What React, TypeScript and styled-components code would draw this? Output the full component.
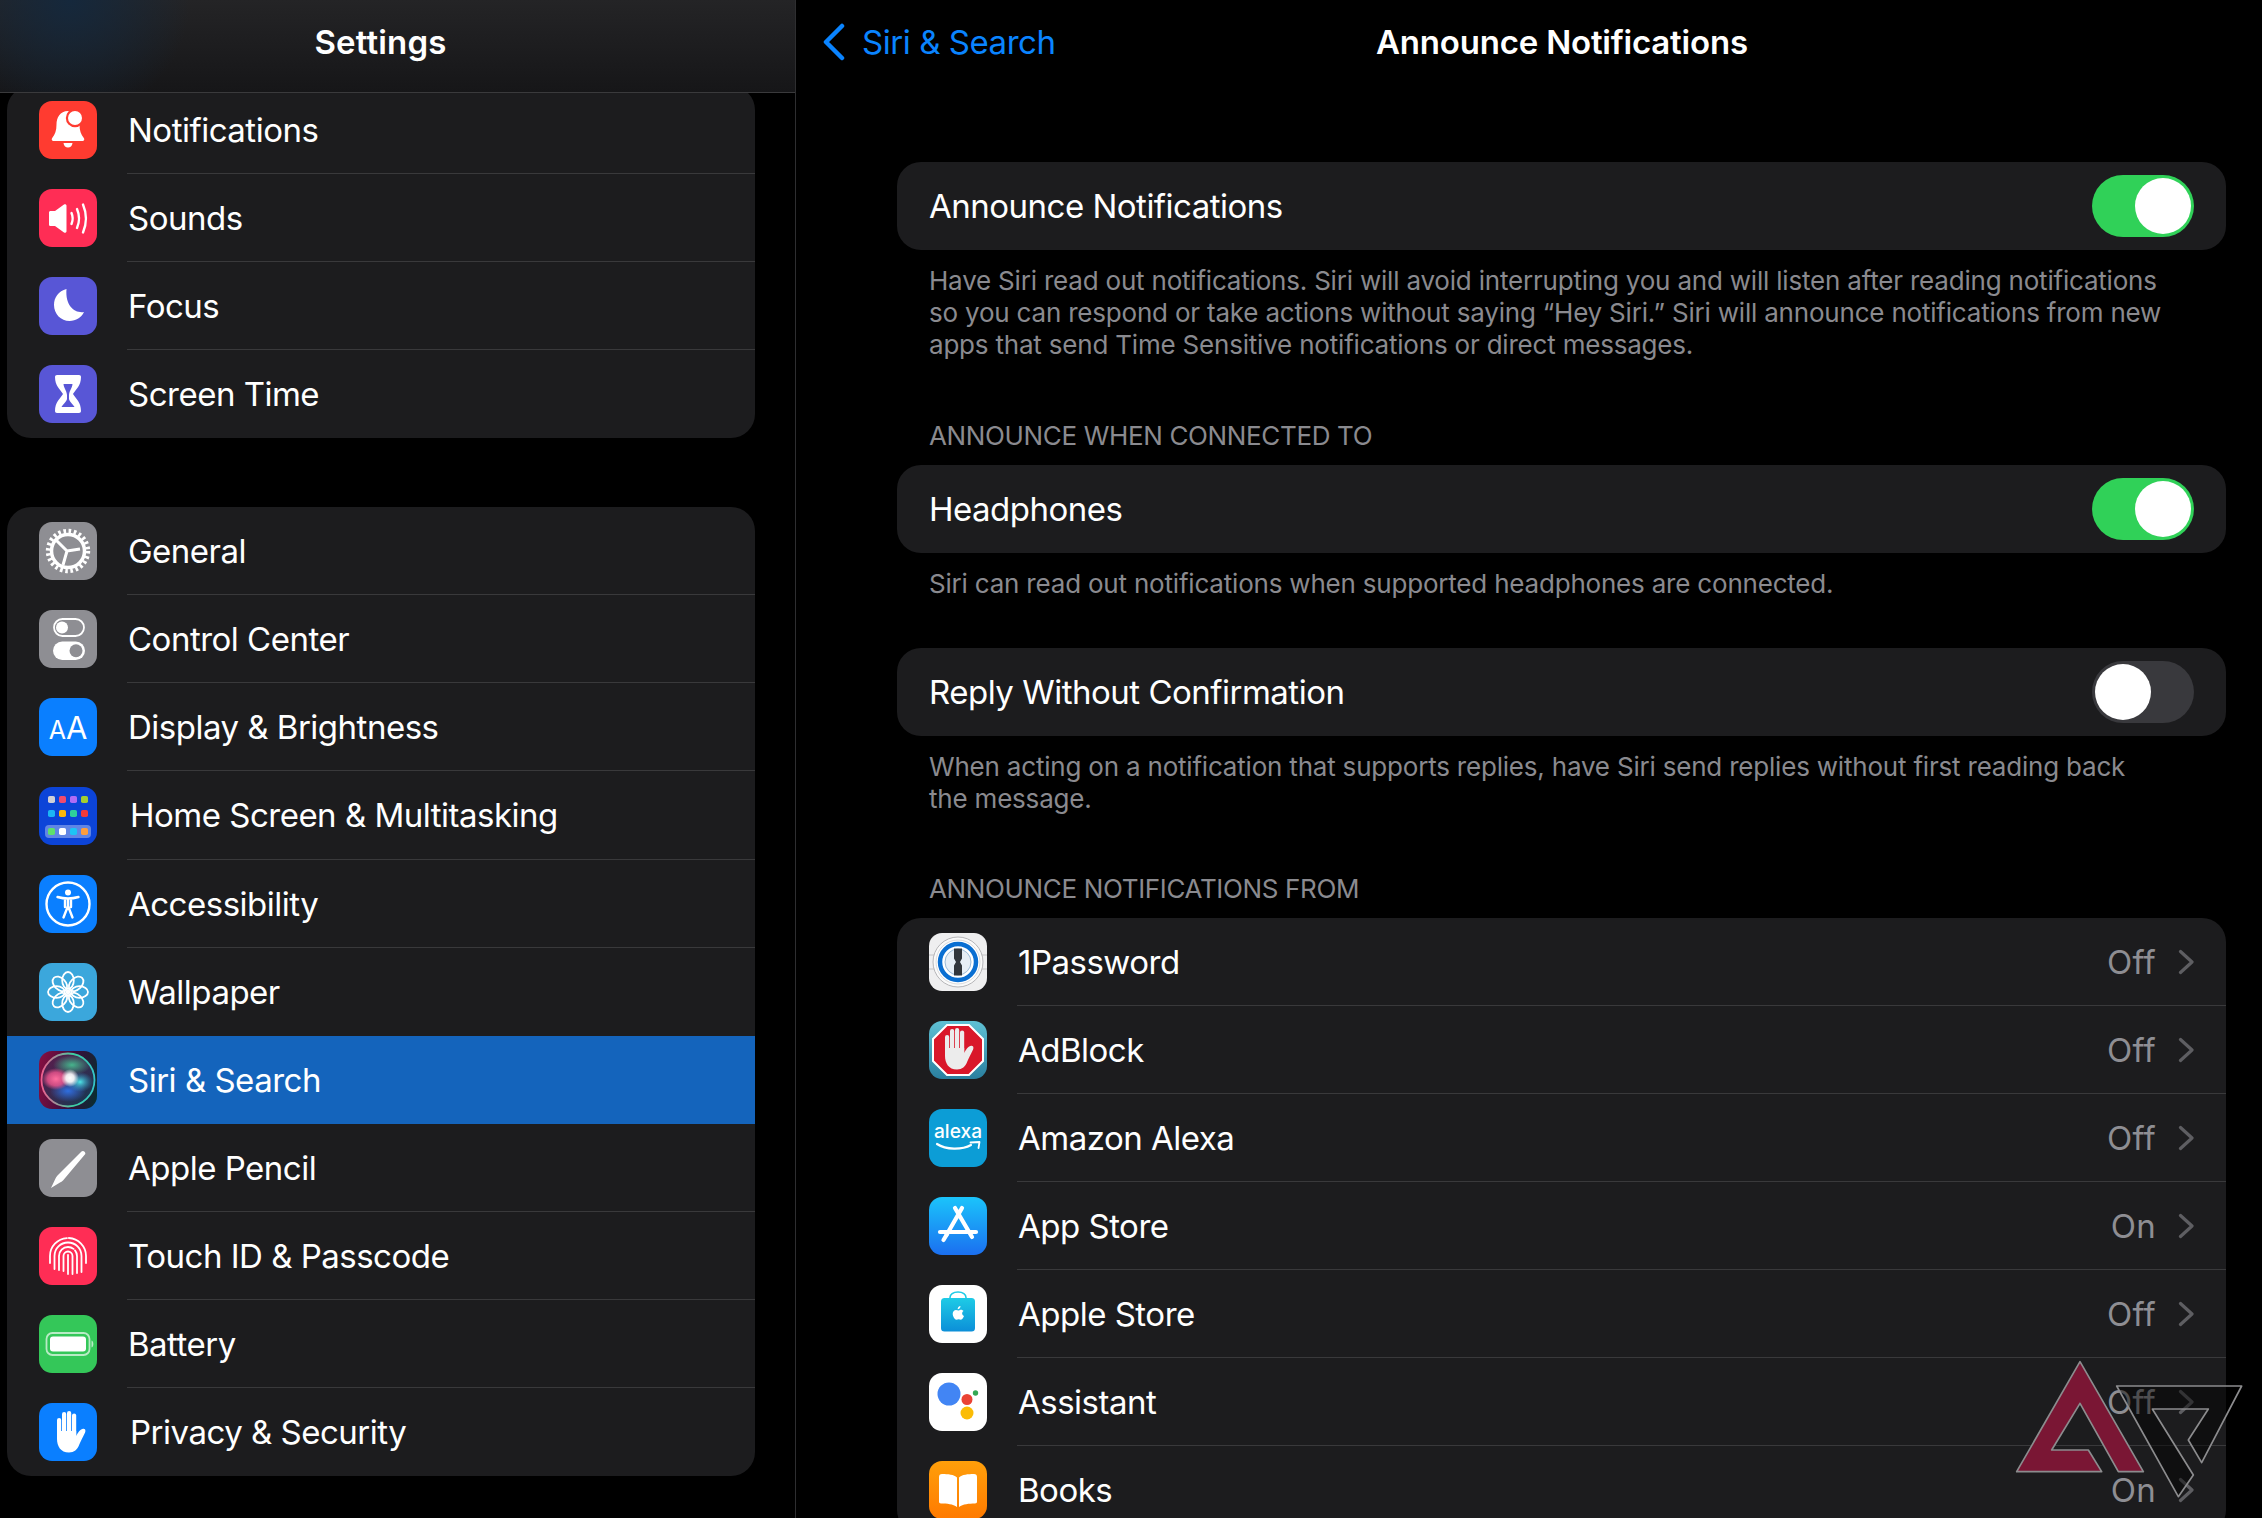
import React from 'react';
import styled, { createGlobalStyle } from 'styled-components';

const Global = createGlobalStyle`
    html, body {
        margin: 0;
        background: #000;
    }
    body {
        font-family: Inter, "Noto Sans", "Liberation Sans", sans-serif;
        color: #fff;
    }
`;

const Page = styled.div`
    position: relative;
    display: flex;
    width: 2262px;
    height: 1518px;
    overflow: hidden;
    background: #000;
`;

const Sidebar = styled.aside`
    width: 796px;
    flex: none;
    box-sizing: border-box;
    border-right: 1px solid #2e2e30;
    display: flex;
    flex-direction: column;
`;

const SidebarHead = styled.header`
    position: relative;
    z-index: 1;
    height: 93px;
    flex: none;
    box-sizing: border-box;
    padding-right: 34px;
    padding-bottom: 9px;
    display: flex;
    align-items: center;
    justify-content: center;
    border-bottom: 1px solid #3a3a3c;
    background: radial-gradient(circle at 70px 0, #15283c 0, rgba(21, 40, 60, 0) 120px), linear-gradient(#242426, #161618);
    font-size: 33px;
    font-weight: 600;
    letter-spacing: 0.15px;
`;

const SideList = styled.div`
    padding: 0 40px 0 7px;
    margin-top: -7px;
    display: flex;
    flex-direction: column;
    gap: 69px;
`;

const Card = styled.div`
    background: #1c1c1e;
    border-radius: 24px;
    overflow: hidden;
    flex: none;
`;

const Row = styled.div<{ $active?: boolean; $tall?: boolean }>`
    height: ${(p) => (p.$tall ? 89 : 88)}px;
    display: flex;
    align-items: center;
    padding-left: 32px;
    background: ${(p) => (p.$active ? '#1464bc' : 'transparent')};
`;

const RowBody = styled.div<{ $line: boolean; $shift?: boolean }>`
    flex: 1;
    align-self: stretch;
    display: flex;
    align-items: center;
    margin-left: 30px;
    padding-left: ${(p) => (p.$shift ? 3 : 1)}px;
    box-sizing: border-box;
    border-bottom: 1px solid ${(p) => (p.$line ? '#39393b' : 'transparent')};
`;

const RowLabel = styled.span`
    font-size: 33px;
    letter-spacing: -0.5px;
    color: #fff;
`;

const Tile = styled.div<{ $bg: string }>`
    width: 58px;
    height: 58px;
    flex: none;
    border-radius: 13px;
    background: ${(p) => p.$bg};
    overflow: hidden;
    display: flex;
    align-items: center;
    justify-content: center;
    svg {
        display: block;
    }
`;

const AaGlyph = styled.span`
    font-size: 31px;
    line-height: 1;
    color: #fff;
    small {
        font-size: 25px;
    }
`;

const Pane = styled.main`
    flex: 1;
    min-width: 0;
    display: flex;
    flex-direction: column;
`;

const PaneHead = styled.header`
    height: 84px;
    flex: none;
    display: flex;
    align-items: center;
    padding-left: 26px;
`;

const BackLink = styled.div`
    width: 554px;
    flex: none;
    display: flex;
    align-items: center;
    gap: 17px;
    color: #0a84ff;
    font-size: 33px;
    letter-spacing: -0.45px;
`;

const PaneTitle = styled.h1`
    margin: 0;
    font-size: 33px;
    font-weight: 600;
    letter-spacing: -0.2px;
`;

const PaneBody = styled.div`
    padding: 78px 36px 0 101px;
    display: flex;
    flex-direction: column;
`;

const FormRow = styled.div`
    height: 88px;
    box-sizing: border-box;
    padding: 0 32px 0 32px;
    display: flex;
    align-items: center;
    justify-content: space-between;
`;

const Note = styled.p<{ $after: number }>`
    margin: 15px 0 ${(p) => p.$after}px;
    padding-left: 32px;
    font-size: 26px;
    line-height: 32.2px;
    letter-spacing: -0.2px;
    color: #8a8a8f;
    white-space: nowrap;
`;

const Caption = styled.div`
    margin: 0 0 14px;
    padding-left: 32px;
    font-size: 26px;
    line-height: 31px;
    letter-spacing: -0.35px;
    color: #8a8a8f;
`;

const Toggle = styled.div<{ $on: boolean }>`
    width: 102px;
    height: 62px;
    padding: 3px;
    box-sizing: border-box;
    border-radius: 31px;
    background: ${(p) => (p.$on ? '#30d158' : '#39393d')};
    display: flex;
    justify-content: ${(p) => (p.$on ? 'flex-end' : 'flex-start')};
    &::after {
        content: '';
        width: 56px;
        height: 56px;
        border-radius: 50%;
        background: #fff;
    }
`;

const AppValue = styled.span`
    margin-left: auto;
    font-size: 33px;
    letter-spacing: 0.2px;
    color: #8e8e93;
`;

const Chevron = styled.svg`
    width: 16px;
    height: 26px;
    margin: 0 32px 0 22px;
    flex: none;
`;

const Watermark = styled.svg`
    position: absolute;
    left: 1900px;
    top: 1300px;
    width: 362px;
    height: 218px;
    pointer-events: none;
`;

const Svg = ({ children }: { children: React.ReactNode }) => (
    <svg width="58" height="58" viewBox="0 0 58 58" fill="none">
        {children}
    </svg>
);

const HandShape = ({ fill }: { fill: string }) => (
    <g fill={fill}>
        <rect x="18" y="15" width="4.200" height="20" rx="2.100" />
        <rect x="23" y="9" width="4.200" height="25" rx="2.100" />
        <rect x="28" y="8" width="4.200" height="26" rx="2.100" />
        <rect x="33" y="10.500" width="4.200" height="24" rx="2.100" />
        <path d="M18 28h19.200v5c1.200-3 4.800-7.800 7.400-7.300 2.300.4 2.200 2.600 1 4.900-2 4-3.800 7.400-5.400 11.200-1.800 4.800-5 7.700-10.200 7.700C21.500 49.500 18 43 18 36z" />
    </g>
);

const icons: Record<string, React.ReactNode> = {
    bell: (
        <Tile $bg="#ff3b30">
            <Svg>
                <path
                    d="M29 10c-8 0-11.500 6.500-11.500 13.500 0 6-1.500 10-4.300 13.600-1 1.300-.4 2.900 1.300 2.900h29c1.700 0 2.300-1.600 1.300-2.900C42 33.500 40.500 29.500 40.500 23.500 40.500 16.500 37 10 29 10z"
                    fill="#fff"
                />
                <path d="M24.500 42h9c-.4 3-2.200 4.600-4.500 4.600S24.900 45 24.500 42z" fill="#fff" />
                <circle cx="36" cy="17" r="9.200" fill="#ff3b30" />
                <circle cx="36" cy="17" r="7" fill="#fff" />
            </Svg>
        </Tile>
    ),
    sound: (
        <Tile $bg="#ff2d55">
            <Svg>
                <path d="M10 23.500c0-1 .8-1.500 1.500-1.500H16l9-6.500c1-.7 2.500-.2 2.500 1.200v25.600c0 1.400-1.500 1.900-2.500 1.200L16 37h-4.500c-.7 0-1.500-.5-1.500-1.500z" fill="#fff" />
                <path d="M32.500 24c1.500 3.500 1.500 7.500 0 11M38 20c2.600 6 2.600 13 0 19M44 15.500c3.800 9 3.800 19 0 28" stroke="#fff" strokeWidth="2.400" strokeLinecap="round" />
            </Svg>
        </Tile>
    ),
    moon: (
        <Tile $bg="#5856d6">
            <Svg>
                <path d="M27.500 12C19.500 14 15 20.500 15 28c0 9 7 16 15.500 16 6.500 0 12-3.500 14.500-9-9 1.500-19-6-17.500-23z" fill="#fff" />
            </Svg>
        </Tile>
    ),
    hourglass: (
        <Tile $bg="#5856d6">
            <Svg>
                <path d="M18 10h22c1.200 0 2 .8 2 2 0 9-5 12-8 17 3 5 8 8 8 17 0 1.200-.8 2-2 2H18c-1.200 0-2-.8-2-2 0-9 5-12 8-17-3-5-8-8-8-17 0-1.200.8-2 2-2z" fill="#fff" />
                <path d="M24.500 19h9c-.3 4-3 6-3.500 11h-2c-.5-5-3.200-7-3.500-11zM28 30h2v4c.5 3 4 5 5.500 8h-13c1.500-3 5-5 5.500-8z" fill="#5856d6" />
            </Svg>
        </Tile>
    ),
    gear: (
        <Tile $bg="#8e8e93">
            <Svg>
                <circle cx="29" cy="29" r="20" stroke="#fff" strokeWidth="4.400" strokeDasharray="2.600 2.636" />
                <circle cx="29" cy="29" r="16.500" stroke="#fff" strokeWidth="3.500" />
                <path d="M28 29L16 17M28 29l13-2M28 29l-4 14" stroke="#fff" strokeWidth="3" />
            </Svg>
        </Tile>
    ),
    control: (
        <Tile $bg="#8e8e93">
            <Svg>
                <rect x="15" y="9" width="30" height="17" rx="8.500" stroke="#fff" strokeWidth="1.800" />
                <circle cx="23" cy="17.500" r="6" fill="#fff" />
                <rect x="14" y="31.500" width="32" height="18.500" rx="9.250" fill="#fff" />
                <circle cx="37" cy="40.750" r="6.500" fill="#8e8e93" />
            </Svg>
        </Tile>
    ),
    display: (
        <Tile $bg="#0a7fff">
            <AaGlyph>
                <small>A</small>A
            </AaGlyph>
        </Tile>
    ),
    home: (
        <Tile $bg="#0c44d8">
            <Svg>
                <rect x="6" y="38" width="46" height="13" rx="4" fill="#fff" fillOpacity="0.35" />
                {['#d0d0d8', '#f04b6e', '#b06cf5', '#a5cf2f', '#1cb5f5', '#f9b80c', '#2ecf9a', '#f33a3a', '#5ee06c', '#ffffff', '#1cc4f5', '#ff9e3c'].map((c, i) => (
                    <rect key={c} x={9 + (i % 4) * 11} y={[9, 23, 41][Math.floor(i / 4)]} width="7" height="7" rx="1.800" fill={c} />
                ))}
            </Svg>
        </Tile>
    ),
    access: (
        <Tile $bg="#0a7fff">
            <Svg>
                <circle cx="29" cy="29" r="21.500" stroke="#fff" strokeWidth="2.400" />
                <circle cx="29" cy="17.500" r="3" fill="#fff" />
                <path d="M18.500 22c3.500 1 7 1.500 10.500 1.500S36 23 39.500 22M29 23.500V31M29 31l-4.500 11.500M29 31l4.500 11.500M26 24v8M32 24v8" stroke="#fff" strokeWidth="2.400" strokeLinecap="round" />
            </Svg>
        </Tile>
    ),
    flower: (
        <Tile $bg="#3ba7dc">
            <Svg>
                {[0, 45, 90, 135, 180, 225, 270, 315].map((a) => (
                    <ellipse key={a} cx="29" cy="17.500" rx="5.800" ry="8.500" stroke="#fff" strokeWidth="1.800" transform={`rotate(${a} 29 29)`} />
                ))}
                <circle cx="29" cy="29" r="2.400" fill="#fff" />
            </Svg>
        </Tile>
    ),
    siri: (
        <Tile $bg="linear-gradient(100deg, #8a0f42, #3a0d3c 55%, #05302f)">
            <Svg>
                <defs>
                    <linearGradient id="siriOrb" x1="0" y1="0" x2="1" y2="1">
                        <stop offset="0" stopColor="#5e1a4c" />
                        <stop offset="1" stopColor="#123a52" />
                    </linearGradient>
                    <linearGradient id="siriRing" x1="0" y1="0.3" x2="1" y2="0.3">
                        <stop offset="0" stopColor="#ef5f90" />
                        <stop offset="0.6" stopColor="#3dd0a0" />
                        <stop offset="1" stopColor="#35c4c8" />
                    </linearGradient>
                    <radialGradient id="siriPink">
                        <stop offset="0" stopColor="#ff6f9f" />
                        <stop offset="0.6" stopColor="#f0558f" stopOpacity="0.8" />
                        <stop offset="1" stopColor="#f0558f" stopOpacity="0" />
                    </radialGradient>
                    <radialGradient id="siriCyan">
                        <stop offset="0" stopColor="#4fe6e6" />
                        <stop offset="1" stopColor="#2c9ed8" stopOpacity="0" />
                    </radialGradient>
                    <radialGradient id="siriBlue">
                        <stop offset="0" stopColor="#2f6fe0" />
                        <stop offset="1" stopColor="#2f6fe0" stopOpacity="0" />
                    </radialGradient>
                    <radialGradient id="siriGreen">
                        <stop offset="0" stopColor="#46b48c" />
                        <stop offset="1" stopColor="#46b48c" stopOpacity="0" />
                    </radialGradient>
                    <radialGradient id="siriCore">
                        <stop offset="0" stopColor="#fff" />
                        <stop offset="0.45" stopColor="#fff" stopOpacity="0.9" />
                        <stop offset="1" stopColor="#fff" stopOpacity="0" />
                    </radialGradient>
                </defs>
                <circle cx="29" cy="29" r="26.500" fill="url(#siriOrb)" stroke="url(#siriRing)" strokeWidth="1.800" />
                <ellipse cx="33" cy="14" rx="19" ry="10" fill="url(#siriGreen)" />
                <ellipse cx="29" cy="40" rx="18" ry="11" fill="url(#siriBlue)" />
                <ellipse cx="17" cy="28" rx="14" ry="11" fill="url(#siriPink)" />
                <ellipse cx="41" cy="31" rx="13" ry="10" fill="url(#siriCyan)" />
                <circle cx="31" cy="27" r="9" fill="url(#siriCore)" />
            </Svg>
        </Tile>
    ),
    pencil: (
        <Tile $bg="#8e8e93">
            <Svg>
                <path d="M42.500 12.500c1.500-1.500 4.500.5 3.800 2.500L24 41.500c-1 1-2 1.500-3 2L12 49l4.500-9.500c.5-1 1-2 2-3z" fill="#fff" />
            </Svg>
        </Tile>
    ),
    touch: (
        <Tile $bg="#ff2d55">
            <Svg>
                <g stroke="#fff" strokeWidth="1.800" strokeLinecap="round">
                    {[4.500, 9, 13.500, 18].map((r, i) => (
                        <path key={r} d={`M${29 - r} ${i === 3 ? 36 : 44 - i} V29 A${r} ${r} 0 0 1 ${29 + r} 29 V${i === 3 ? 36 : 47 - i}`} strokeDasharray={i % 2 ? '34 2 40' : undefined} />
                    ))}
                    <path d="M29 28v19" />
                </g>
            </Svg>
        </Tile>
    ),
    battery: (
        <Tile $bg="#34c759">
            <Svg>
                <rect x="7.500" y="18" width="43" height="22" rx="6" stroke="#fff" strokeOpacity="0.65" strokeWidth="1.800" />
                <rect x="11" y="21.500" width="36" height="15" rx="3" fill="#fff" />
                <path d="M52.500 25.500c1.500.5 1.800 2 1.800 3.500s-.3 3-1.800 3.500z" fill="#fff" fillOpacity="0.65" />
            </Svg>
        </Tile>
    ),
    hand: (
        <Tile $bg="#0a7fff">
            <Svg>
                <HandShape fill="#fff" />
            </Svg>
        </Tile>
    ),
    onePassword: (
        <Tile $bg="#efeff0">
            <Svg>
                <path d="M0 22h58M0 36h58" stroke="#c2c2c4" strokeWidth="1" />
                <circle cx="29" cy="29" r="25" stroke="#b5b5b8" strokeWidth="1" fill="#fafafa" />
                <circle cx="29" cy="29" r="22" fill="#fff" stroke="#d0d0d2" strokeWidth="0.800" />
                <circle cx="29" cy="29" r="18" stroke="#0a6fd2" strokeWidth="4.500" fill="#fff" />
                <circle cx="29" cy="29" r="13" fill="#e6eef6" stroke="#9bbbd8" strokeWidth="1" />
                <path d="M25 15.500h8v10l-2 3.500 2 3.500v10h-8v-10l2-3.500-2-3.500z" fill="#31363c" />
            </Svg>
        </Tile>
    ),
    adblock: (
        <Tile $bg="linear-gradient(#5fc0d4, #2a7f9f)">
            <Svg>
                <path d="M18 4h22l14 14v22L40 54H18L4 40V18z" fill="#d9172a" stroke="#fff" strokeWidth="2" />
                <g transform="translate(-2 -1)">
                    <HandShape fill="#ececec" />
                </g>
            </Svg>
        </Tile>
    ),
    alexa: (
        <Tile $bg="#0c9dd6">
            <Svg>
                <text x="5" y="29" fill="#fff" fontFamily="Inter, sans-serif" fontSize="19" fontWeight="500" textLength="48" lengthAdjust="spacingAndGlyphs">
                    alexa
                </text>
                <path d="M8 35c9 6 25 6 34 1" stroke="#fff" strokeWidth="2.200" strokeLinecap="round" />
                <path d="M41.500 33.500l9-.5-1 6" stroke="#fff" strokeWidth="1.800" strokeLinecap="round" strokeLinejoin="round" />
            </Svg>
        </Tile>
    ),
    appStore: (
        <Tile $bg="linear-gradient(#1bc4fb, #1b6ff0)">
            <Svg>
                <g stroke="#fff" strokeWidth="4.200" strokeLinecap="round">
                    <path d="M33 11L17.500 38M26 11l17 29" />
                    <path d="M11 35h36" />
                    <path d="M14.500 43l3-5" />
                </g>
            </Svg>
        </Tile>
    ),
    appleStore: (
        <Tile $bg="#fff">
            <Svg>
                <defs>
                    <linearGradient id="bagFill" x1="0" y1="0" x2="0" y2="1">
                        <stop offset="0" stopColor="#1ecbe6" />
                        <stop offset="1" stopColor="#0c8fd8" />
                    </linearGradient>
                </defs>
                <path d="M21 15v-2.500c0-3 3-5.500 8-5.500s8 2.500 8 5.500V15" stroke="#1ecbe6" strokeWidth="1.600" />
                <rect x="12" y="13" width="34" height="33.500" rx="3.500" fill="url(#bagFill)" />
                <path d="M29.400 25.500c.8-.1 2-.8 2.600-.8 1 0 2 .6 2.500 1.400-2 1.300-1.700 4 .5 5-.6 1.600-1.900 3.700-3 3.700-.8 0-1.400-.5-2.300-.5s-1.500.5-2.300.5c-1.600 0-3.700-3.500-3.700-6 0-2.600 1.700-3.900 3.300-3.900.9 0 1.700.6 2.400.6zM31.500 21c.1 1.600-1.200 3.200-2.800 3.200-.2-1.500 1.200-3.100 2.800-3.200z" fill="#fff" />
            </Svg>
        </Tile>
    ),
    assistant: (
        <Tile $bg="#fff">
            <Svg>
                <circle cx="20" cy="21" r="11.500" fill="#4285f4" />
                <circle cx="38" cy="26.500" r="5.500" fill="#ea4335" />
                <circle cx="38" cy="40" r="6.500" fill="#fbbc05" />
                <circle cx="46.500" cy="20" r="2.700" fill="#34a853" />
            </Svg>
        </Tile>
    ),
    books: (
        <Tile $bg="linear-gradient(#ff9f0a, #ff7a00)">
            <Svg>
                <path d="M10 16c0-2 1-3 3-3 6 0 12 .5 15 3.500V46c-4-3-10-3.500-16-3.500-1.500 0-2-1-2-2zM48 16c0-2-1-3-3-3-6 0-12 .5-15 3.500V46c4-3 10-3.500 16-3.500 1.500 0 2-1 2-2z" fill="#fff" />
            </Svg>
        </Tile>
    )
};

type SideItem = { label: string; icon: string; active?: boolean; shift?: boolean; tall?: boolean };

const topItems: SideItem[] = [
    { label: 'Notifications', icon: 'bell' },
    { label: 'Sounds', icon: 'sound' },
    { label: 'Focus', icon: 'moon' },
    { label: 'Screen Time', icon: 'hourglass' }
];

const mainItems: SideItem[] = [
    { label: 'General', icon: 'gear' },
    { label: 'Control Center', icon: 'control' },
    { label: 'Display & Brightness', icon: 'display' },
    { label: 'Home Screen & Multitasking', icon: 'home', shift: true, tall: true },
    { label: 'Accessibility', icon: 'access' },
    { label: 'Wallpaper', icon: 'flower' },
    { label: 'Siri & Search', icon: 'siri', active: true },
    { label: 'Apple Pencil', icon: 'pencil' },
    { label: 'Touch ID & Passcode', icon: 'touch' },
    { label: 'Battery', icon: 'battery' },
    { label: 'Privacy & Security', icon: 'hand', shift: true }
];

const apps = [
    { label: '1Password', icon: 'onePassword', value: 'Off' },
    { label: 'AdBlock', icon: 'adblock', value: 'Off' },
    { label: 'Amazon Alexa', icon: 'alexa', value: 'Off' },
    { label: 'App Store', icon: 'appStore', value: 'On' },
    { label: 'Apple Store', icon: 'appleStore', value: 'Off' },
    { label: 'Assistant', icon: 'assistant', value: 'Off' },
    { label: 'Books', icon: 'books', value: 'On' }
];

const SideCard = ({ items }: { items: SideItem[] }) => (
    <Card>
        {items.map((item, i) => {
            const next = items[i + 1];
            const line = !!next && !item.active && !next.active;
            return (
                <Row key={item.label} $active={item.active} $tall={item.tall}>
                    {icons[item.icon]}
                    <RowBody $line={line} $shift={item.shift}>
                        <RowLabel>{item.label}</RowLabel>
                    </RowBody>
                </Row>
            );
        })}
    </Card>
);

export default function App() {
    return (
        <Page>
            <Global />
            <Sidebar>
                <SidebarHead>Settings</SidebarHead>
                <SideList>
                    <SideCard items={topItems} />
                    <SideCard items={mainItems} />
                </SideList>
            </Sidebar>
            <Pane>
                <PaneHead>
                    <BackLink>
                        <svg width="23" height="38" viewBox="0 0 23 38" fill="none">
                            <path d="M20 3L4 19l16 16" stroke="#0a84ff" strokeWidth="4.500" strokeLinecap="round" strokeLinejoin="round" />
                        </svg>
                        Siri &amp; Search
                    </BackLink>
                    <PaneTitle>Announce Notifications</PaneTitle>
                </PaneHead>
                <PaneBody>
                    <Card>
                        <FormRow>
                            <RowLabel>Announce Notifications</RowLabel>
                            <Toggle $on />
                        </FormRow>
                    </Card>
                    <Note $after={58.6}>
                        Have Siri read out notifications. Siri will avoid interrupting you and will listen after reading notifications
                        <br />
                        so you can respond or take actions without saying “Hey Siri.” Siri will announce notifications from new
                        <br />
                        apps that send Time Sensitive notifications or direct messages.
                    </Note>
                    <Caption>ANNOUNCE WHEN CONNECTED TO</Caption>
                    <Card>
                        <FormRow>
                            <RowLabel>Headphones</RowLabel>
                            <Toggle $on />
                        </FormRow>
                    </Card>
                    <Note $after={47.2}>Siri can read out notifications when supported headphones are connected.</Note>
                    <Card>
                        <FormRow>
                            <RowLabel>Reply Without Confirmation</RowLabel>
                            <Toggle $on={false} />
                        </FormRow>
                    </Card>
                    <Note $after={58.4}>
                        When acting on a notification that supports replies, have Siri send replies without first reading back
                        <br />
                        the message.
                    </Note>
                    <Caption>ANNOUNCE NOTIFICATIONS FROM</Caption>
                    <Card>
                        {apps.map((app, i) => (
                            <Row key={app.label}>
                                {icons[app.icon]}
                                <RowBody $line={i < apps.length - 1}>
                                    <RowLabel>{app.label}</RowLabel>
                                    <AppValue>{app.value}</AppValue>
                                    <Chevron viewBox="0 0 16 26" fill="none">
                                        <path d="M2.500 2.500L14 13 2.500 23.500" stroke="#5e5e62" strokeWidth="3.200" strokeLinecap="round" strokeLinejoin="round" />
                                    </Chevron>
                                </RowBody>
                            </Row>
                        ))}
                    </Card>
                </PaneBody>
            </Pane>
            <Watermark viewBox="0 0 1086 654" fill="none">
                <path d="M650 258H1025L905 488L865 420L925 327H757L880 525L835 590Z" fill="#000" fillOpacity="0.45" stroke="#8c8c8e" strokeWidth="5" strokeLinejoin="round" />
                <path d="M540 185L730 515H655L540 310L455 450H565L605 515H350Z" fill="#7a1634" stroke="#8c8c8e" strokeWidth="5" strokeLinejoin="round" />
            </Watermark>
        </Page>
    );
}
